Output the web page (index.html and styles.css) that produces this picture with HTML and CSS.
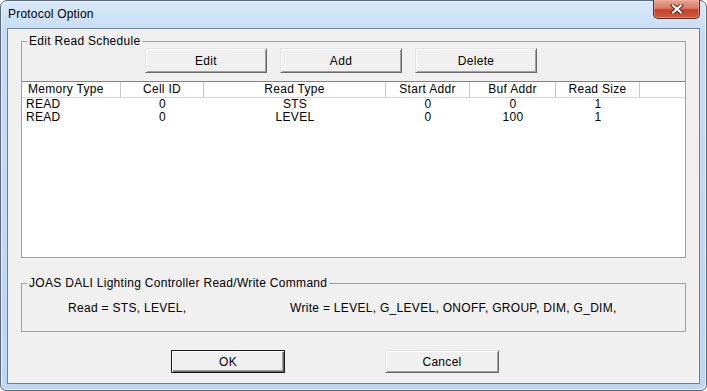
FILE: index.html
```html
<!DOCTYPE html>
<html lang="en">
<head>
    <meta charset="UTF-8">
    <title>Protocol Option</title>
    <link rel="stylesheet" href="styles.css">
</head>
<body>
<div class="window">
    <div class="titlebar">
        <span class="title">Protocol Option</span>
        <button class="close" type="button">
            <svg width="14" height="10" viewBox="0 0 14 10">
                <path d="M3 1.5 L11 8.5 M11 1.5 L3 8.5" stroke="#5a2418" stroke-width="4" stroke-linecap="square"/>
                <path d="M3 1.5 L11 8.5 M11 1.5 L3 8.5" stroke="#ffffff" stroke-width="2.2" stroke-linecap="square"/>
            </svg>
        </button>
    </div>
    <div class="client">
        <fieldset class="group group-schedule">
            <legend>Edit Read Schedule</legend>
            <div class="tools">
                <button class="btn btn-tool" type="button">Edit</button>
                <button class="btn btn-tool" type="button">Add</button>
                <button class="btn btn-tool" type="button">Delete</button>
            </div>
            <div class="list">
                <div class="list-head">
                    <span class="col col-left">Memory Type</span>
                    <span class="col">Cell ID</span>
                    <span class="col">Read Type</span>
                    <span class="col">Start Addr</span>
                    <span class="col">Buf Addr</span>
                    <span class="col">Read Size</span>
                    <span class="col col-fill"></span>
                </div>
                <div class="list-row">
                    <span class="cell cell-left">READ</span>
                    <span class="cell">0</span>
                    <span class="cell">STS</span>
                    <span class="cell">0</span>
                    <span class="cell">0</span>
                    <span class="cell">1</span>
                    <span class="cell"></span>
                </div>
                <div class="list-row">
                    <span class="cell cell-left">READ</span>
                    <span class="cell">0</span>
                    <span class="cell">LEVEL</span>
                    <span class="cell">0</span>
                    <span class="cell">100</span>
                    <span class="cell">1</span>
                    <span class="cell"></span>
                </div>
            </div>
        </fieldset>

        <fieldset class="group group-command">
            <legend>JOAS DALI Lighting Controller Read/Write Command</legend>
            <div class="command">
                <span class="cmd-read">Read = STS, LEVEL,</span>
                <span class="cmd-write">Write = LEVEL, G_LEVEL, ONOFF, GROUP, DIM, G_DIM,</span>
            </div>
        </fieldset>

        <div class="actions">
            <button class="btn btn-dialog btn-default" type="button">OK</button>
            <button class="btn btn-dialog" type="button">Cancel</button>
        </div>
    </div>
</div>
</body>
</html>
```

FILE: styles.css
```css
body {
    margin: 0;
    background: #ffffff;
    font: normal 12px/14px "Liberation Sans", Arial, sans-serif;
    letter-spacing: 0.3px;
    color: #000000;
}

.window {
    box-sizing: border-box;
    width: 707px;
    height: 391px;
    padding: 0 6px 6px 6px;
    border: 1px solid #5a6b80;
    border-radius: 7px 7px 6px 6px;
    background: linear-gradient(to bottom, #d9e9f9 0, #c7ddf3 30px, #bed6ee 100%);
    box-shadow: inset 1px 1px 0 #e9f2fb, inset -1px -1px 0 #e9f2fb;
}

/* 标题栏 */
.titlebar {
    display: flex;
    justify-content: space-between;
    height: 27px;
}

.title {
    margin-left: 1px;
    line-height: 27px;
    font-size: 12px;
    letter-spacing: 0.2px;
    color: #000000;
}

.close {
    display: flex;
    align-items: center;
    justify-content: center;
    width: 47px;
    height: 19px;
    margin-top: -1px;
    padding: 0;
    border: 1px solid #5d2a20;
    border-top: none;
    border-radius: 0 0 5px 5px;
    background: linear-gradient(to bottom, #e6a494 0, #d67b68 45%, #c2432b 55%, #cf5a3d 100%);
    box-shadow: inset 0 0 0 1px rgba(255, 190, 170, .45);
}

/* 客户区 */
.client {
    box-sizing: border-box;
    height: 356px;
    padding: 5px 13px 0 13px;
    border: 1px solid #6f8196;
    background: #f0f0f0;
}

.group {
    margin: 0;
    padding: 0;
    min-width: 0;
    border: 1px solid #a0a0a0;
}

.group legend {
    margin-left: 5px;
    padding: 0 2px;
    line-height: 14px;
}

.tools {
    display: flex;
    gap: 13px;
    margin-left: 123px;
}

.btn {
    box-sizing: border-box;
    padding: 0;
    font: inherit;
    letter-spacing: inherit;
    color: #000000;
    background: #f0f0f0;
    border: 1px solid;
    border-color: #e3e3e3 #696969 #696969 #e3e3e3;
    box-shadow: inset 1px 1px 0 #ffffff, inset -1px -1px 0 #a0a0a0;
}

.btn-tool {
    width: 122px;
    height: 25px;
}

/* 列表 */
.list {
    box-sizing: border-box;
    height: 176px;
    margin-top: 8px;
    background: #ffffff;
    border-top: 1px solid #828282;
}

.list-head,
.list-row {
    display: grid;
    grid-template-columns: 99px 83px 182px 84px 86px 84px 1fr;
}

.list-head {
    height: 16px;
    border-bottom: 1px solid #d5d5d5;
    box-sizing: border-box;
}

.col {
    line-height: 15px;
    text-align: center;
    border-right: 1px solid #c8c8c8;
}

.col-left {
    text-align: left;
    padding-left: 6px;
}

.col-fill {
    border-right: none;
}

.list-row {
    height: 13px;
}

.cell {
    line-height: 13px;
    text-align: center;
}

.cell-left {
    text-align: left;
    padding-left: 4px;
}

/* 命令说明 */
.group-command {
    margin-top: 18px;
}

.command {
    display: flex;
    padding: 11px 0 16px 46px;
    line-height: 14px;
}

.cmd-read {
    width: 222px;
}

/* 确认按钮 */
.actions {
    display: flex;
    gap: 100px;
    margin-top: 18px;
    margin-left: 150px;
}

.btn-dialog {
    width: 114px;
    height: 23px;
}

.btn-default {
    border-color: #1a1a1a;
    box-shadow: inset 1px 1px 0 #ffffff, inset -1px -1px 0 #696969, inset -2px -2px 0 #a0a0a0;
}
```
